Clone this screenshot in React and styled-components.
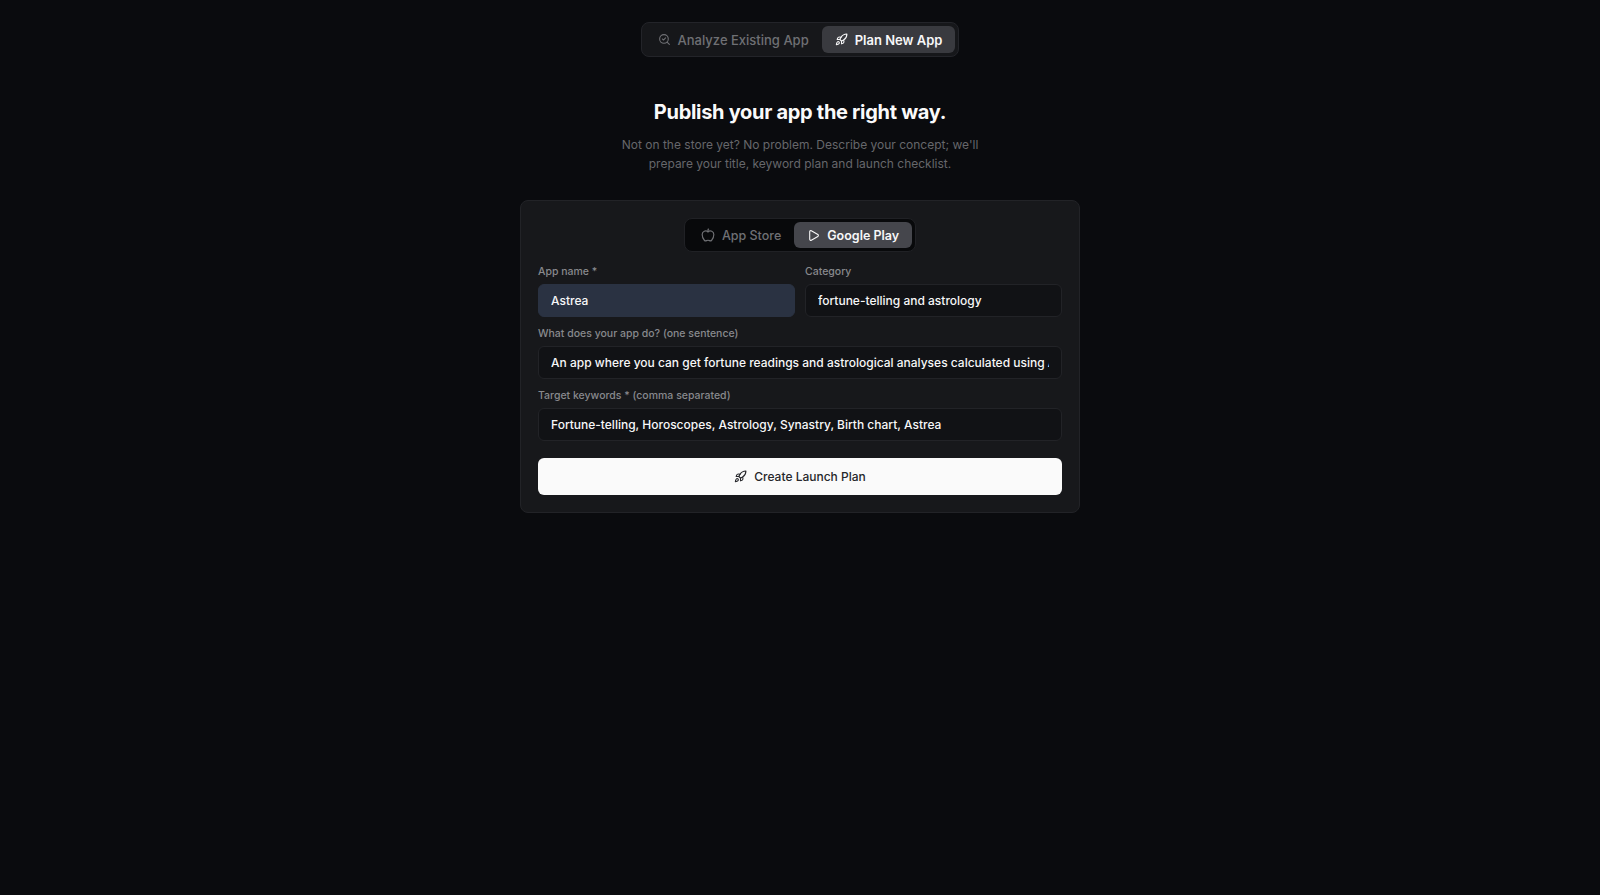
import React from "react";
import styled, { createGlobalStyle } from "styled-components";
import { SearchCheck, Rocket, Apple, Play } from "lucide-react";

const Global = createGlobalStyle`
  html, body { margin: 0; padding: 0; background: #0a0b0e; }
  body { font-family: Inter, "Liberation Sans", sans-serif; -webkit-font-smoothing: antialiased; }
  * { box-sizing: border-box; }
`;

const Page = styled.main`
  min-height: 895px;
  display: flex;
  flex-direction: column;
  align-items: center;
  padding-top: 22px;
  background: #0a0b0e;
`;

const ModeTabs = styled.div`
  display: flex;
  gap: 0;
  height: 35px;
  padding: 3px;
  border-radius: 8px;
  background: #16171a;
  border: 1px solid #232429;
`;

const ModeTab = styled.div`
  display: flex;
  align-items: center;
  gap: 7px;
  height: 27px;
  padding: 0 13px;
  border-radius: 6px;
  font-size: 13px;
  font-weight: ${(p) => (p.$active ? 600 : 500)};
  color: ${(p) => (p.$active ? "#f7f7f8" : "#6f7074")};
  background: ${(p) => (p.$active ? "#393a3f" : "transparent")};
`;

const Title = styled.h1`
  margin: 41px 0 0;
  font-size: 20px;
  line-height: 28px;
  font-weight: 700;
  letter-spacing: -0.3px;
  color: #fafafa;
`;

const Sub = styled.p`
  margin: 9px 0 0;
  width: 400px;
  font-size: 12px;
  line-height: 19px;
  text-align: center;
  color: #66676b;
`;

const Card = styled.section`
  margin-top: 27px;
  width: 560px;
  padding: 17px;
  border-radius: 8px;
  background: #17181b;
  border: 1px solid #222327;
  display: flex;
  flex-direction: column;
`;

const StoreTabs = styled.div`
  align-self: center;
  display: flex;
  height: 34px;
  padding: 3px;
  border-radius: 8px;
  background: #08090b;
  border: 1px solid #202125;
`;

const StoreTab = styled.div`
  display: flex;
  align-items: center;
  gap: 7px;
  height: 26px;
  padding: 0 13px;
  border-radius: 6px;
  font-size: 12.5px;
  font-weight: ${(p) => (p.$active ? 600 : 500)};
  color: ${(p) => (p.$active ? "#f7f7f8" : "#6f7074")};
  background: ${(p) => (p.$active ? "#45464c" : "transparent")};
`;

const Row = styled.div`
  display: grid;
  grid-template-columns: 1fr 1fr;
  gap: 10px;
  margin-top: 14px;
`;

const Field = styled.label`
  display: flex;
  flex-direction: column;
  margin-top: ${(p) => p.$mt || 0}px;
`;

const Label = styled.span`
  height: 12px;
  line-height: 12px;
  margin-bottom: 6px;
  font-size: 10.5px;
  font-weight: 500;
  color: #88898d;
`;

const Input = styled.input`
  height: 33px;
  padding: 0 12px;
  border-radius: 6px;
  font: 500 12px Inter, "Liberation Sans", sans-serif;
  color: #f7f7f8;
  background: ${(p) => (p.$filled ? "#2a3242" : "#111215")};
  border: 1px solid ${(p) => (p.$filled ? "#2a3242" : "#222327")};
  outline: none;
`;

const Submit = styled.button`
  margin-top: 17px;
  height: 37px;
  border: 0;
  border-radius: 6px;
  background: #fafafa;
  color: #26272b;
  display: flex;
  align-items: center;
  justify-content: center;
  gap: 7px;
  font: 500 12px Inter, "Liberation Sans", sans-serif;
`;

export default function App() {
  return (
    <Page>
      <Global />
      <ModeTabs>
        <ModeTab><SearchCheck size={13} />Analyze Existing App</ModeTab>
        <ModeTab $active><Rocket size={13} />Plan New App</ModeTab>
      </ModeTabs>
      <Title>Publish your app the right way.</Title>
      <Sub>Not on the store yet? No problem. Describe your concept; we'll prepare your title, keyword plan and launch checklist.</Sub>
      <Card>
        <StoreTabs>
          <StoreTab><Apple size={14} />App Store</StoreTab>
          <StoreTab $active><Play size={13} />Google Play</StoreTab>
        </StoreTabs>
        <Row>
          <Field>
            <Label>App name *</Label>
            <Input $filled readOnly value="Astrea" />
          </Field>
          <Field>
            <Label>Category</Label>
            <Input readOnly value="fortune-telling and astrology" />
          </Field>
        </Row>
        <Field $mt={11}>
          <Label>What does your app do? (one sentence)</Label>
          <Input readOnly value="An app where you can get fortune readings and astrological analyses calculated using AI." />
        </Field>
        <Field $mt={11}>
          <Label>Target keywords * (comma separated)</Label>
          <Input readOnly value="Fortune-telling, Horoscopes, Astrology, Synastry, Birth chart, Astrea" />
        </Field>
        <Submit><Rocket size={13} />Create Launch Plan</Submit>
      </Card>
    </Page>
  );
}
